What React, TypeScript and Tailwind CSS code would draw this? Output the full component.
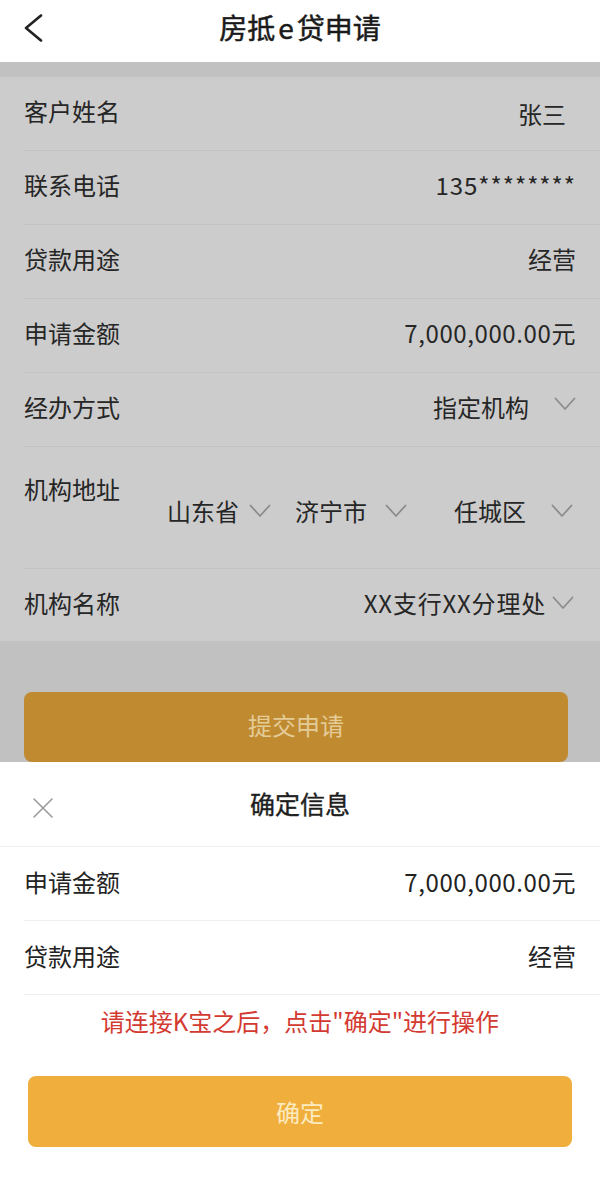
import React from "react"

const font = { fontFamily: '"Noto Sans CJK SC", "Noto Sans", sans-serif' }

function Chevron({ className = "" }: { className?: string }) {
	return (
		<svg width="22" height="14" viewBox="0 0 22 14" className={className} fill="none">
			<path d="M1.5 1.5 L11 12 L20.5 1.5" stroke="#8c8c8c" strokeWidth="1.8" strokeLinecap="round" strokeLinejoin="round" />
		</svg>
	)
}

function Row({ label, children, h = "h-[74px]", last }: { label: string; children: React.ReactNode; h?: string; last?: boolean }) {
	return (
		<div className={`flex ${h} items-center justify-between pb-[5px] pr-6 ${last ? "" : "border-b border-[#c3c3c3]"}`}>
			<span className="text-[24px] leading-[34px] text-[#262626]">{label}</span>
			<div className="flex items-center text-[24px] leading-[34px] text-[#262626]">{children}</div>
		</div>
	)
}

function SheetRow({ label, value, wide }: { label: string; value: string; wide?: boolean }) {
	return (
		<div className="flex h-[74px] items-center justify-between border-b border-[#efefef] pb-[4px] pr-6">
			<span className="text-[24px] leading-[34px] text-[#222]">{label}</span>
			<span className={`text-[24px] leading-[34px] text-[#222] ${wide ? "tracking-[0.6px]" : ""}`}>{value}</span>
		</div>
	)
}

export default function App() {
	return (
		<div className="relative h-[1179px] w-[600px] overflow-hidden bg-[#c1c1c1]" style={font}>
			{/* header */}
			<div className="relative flex h-[62px] items-center justify-center bg-white">
				<svg width="20" height="28" viewBox="0 0 20 28" className="absolute left-[23px] top-[14px]" fill="none">
					<path d="M18 1.5 L3 14 L18 26.5" stroke="#222" strokeWidth="2.6" strokeLinecap="round" strokeLinejoin="round" />
				</svg>
				<h1 className="-mt-[8px] text-[28px] font-normal text-[#1a1a1a] [-webkit-text-stroke:0.5px_#1a1a1a]">
					房抵<span className="mx-[3px]">e</span>贷申请
				</h1>
			</div>

			{/* form, dimmed behind the sheet */}
			<div className="pt-[15px]">
				<div className="bg-[#cccccc] pl-6">
					<Row label="客户姓名">
						<span className="mt-[6px] pr-[10px]">张三</span>
					</Row>
					<Row label="联系电话">
						<span className="tracking-[1px]">135********</span>
					</Row>
					<Row label="贷款用途">
						<span>经营</span>
					</Row>
					<Row label="申请金额">
						<span className="tracking-[0.6px]">7,000,000.00元</span>
					</Row>
					<Row label="经办方式">
						<span>指定机构</span>
						<Chevron className="ml-[25px] -mt-[6px]" />
					</Row>
					<div className="flex h-[122px] items-start border-b border-[#c3c3c3] pr-6 pt-[25px]">
						<span className="text-[24px] leading-[34px] text-[#262626]">机构地址</span>
						<div className="mt-[22px] mr-[3px] flex flex-1 items-center justify-end text-[24px] leading-[34px] text-[#262626]">
							<span>山东省</span>
							<Chevron className="ml-[10px]" />
							<span className="ml-[24px]">济宁市</span>
							<Chevron className="ml-[18px]" />
							<span className="ml-[47px]">任城区</span>
							<Chevron className="ml-[25px]" />
						</div>
					</div>
					<Row label="机构名称" h="h-[72px]" last>
						<span className="tracking-[0.8px]">XX支行XX分理处</span>
						<Chevron className="ml-[6px] mr-[2px]" />
					</Row>
				</div>

				<div className="ml-6 mr-8 mt-[51px] flex h-[70px] items-center justify-center rounded-[8px] bg-[#c08a30]">
					<span className="-mt-[4px] text-[24px] text-[#e4cc98]">提交申请</span>
				</div>
			</div>

			{/* bottom sheet */}
			<div className="absolute bottom-0 left-0 right-0 h-[417px] bg-white">
				<div className="relative flex h-[85px] items-center justify-center border-b border-[#efefef]">
					<svg width="20" height="20" viewBox="0 0 20 20" className="absolute left-[33px] top-[36px]" fill="none">
						<path d="M1 1 L19 19 M19 1 L1 19" stroke="#9a9a9a" strokeWidth="1.6" strokeLinecap="round" />
					</svg>
					<span className="text-[25px] font-normal text-[#1f1f1f] [-webkit-text-stroke:0.4px_#1f1f1f]">确定信息</span>
				</div>
				<div className="pl-6">
					<SheetRow label="申请金额" value="7,000,000.00元" wide />
					<SheetRow label="贷款用途" value="经营" />
				</div>
				<p className="mt-[9px] text-center text-[24px] leading-[34px] text-[#d33a32]">请连接K宝之后，点击"确定"进行操作</p>
				<div className="mx-[28px] mt-[38px] flex h-[71px] items-center justify-center rounded-[8px] bg-[#f0ae3c]">
					<span className="text-[24px] text-[#fdebc0]">确定</span>
				</div>
			</div>
		</div>
	)
}
